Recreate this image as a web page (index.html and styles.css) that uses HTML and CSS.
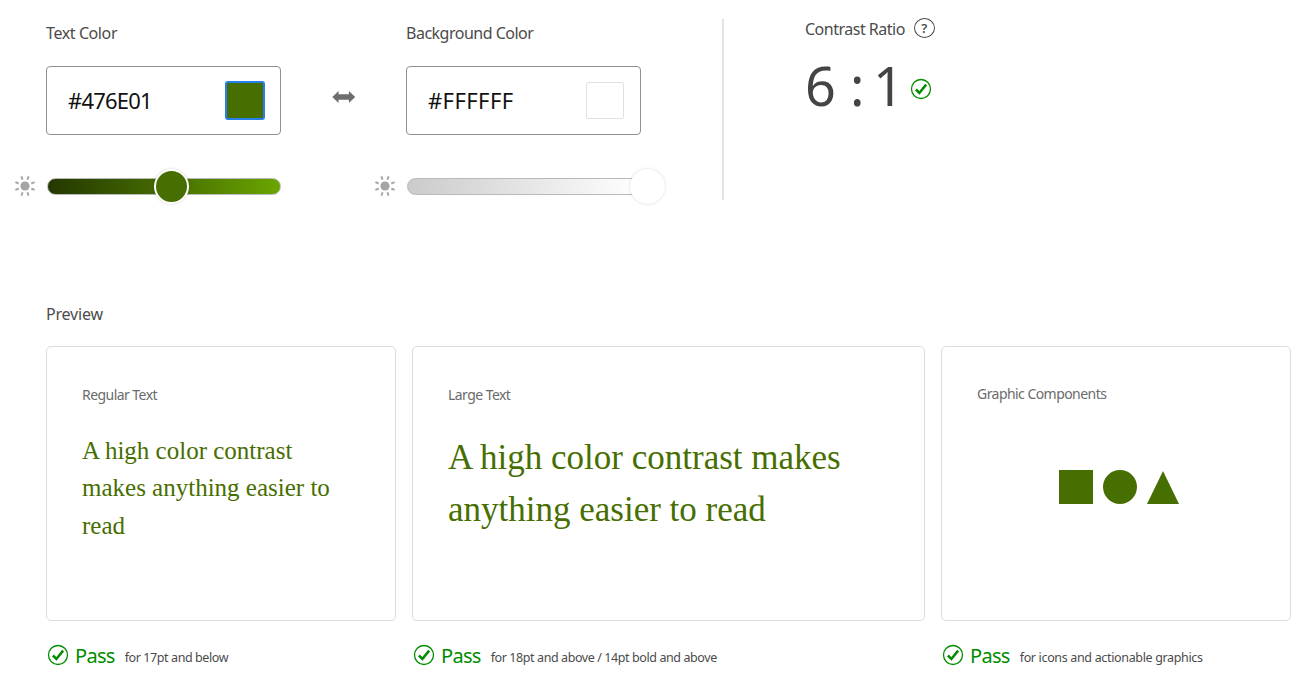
FILE: index.html
```html
<!DOCTYPE html>
<html lang="en">
<head>
<meta charset="utf-8">
<title>Contrast Checker</title>
<link rel="stylesheet" href="styles.css">
</head>
<body>
<svg class="defs" width="0" height="0" aria-hidden="true">
  <symbol id="check" viewBox="0 0 22 22">
    <circle cx="11" cy="11" r="9.5" fill="none" stroke="currentColor" stroke-width="1.3"/>
    <path d="M5.9 11.5L9.4 15L16.1 6.6" fill="none" stroke="currentColor" stroke-width="2.5"/>
  </symbol>
  <symbol id="sun" viewBox="0 0 22 22">
    <circle cx="11" cy="11" r="4.6" fill="currentColor"/>
    <path d="M13.4 4.7L14.6 1.4M17.3 8.5L20.6 7.2M17.3 13.5L20.6 14.8M13.4 17.3L14.6 20.6M8.6 17.3L7.4 20.6M4.7 13.5L1.4 14.8M4.7 8.5L1.4 7.2M8.6 4.7L7.4 1.4" fill="none" stroke="currentColor" stroke-width="1.9"/>
  </symbol>
</svg>
<main class="page">
  <section class="controls">
    <div class="picker">
      <h2 class="label">Text Color</h2>
      <div class="field"><span class="hex">#476E01</span><span class="swatch swatch-active"></span></div>
      <svg class="sun"><use href="#sun"/></svg>
      <div class="track track-green"><span class="thumb thumb-green"></span></div>
    </div>
    <svg class="swap" viewBox="0 0 24 14"><path d="M0.3 7L6.6 0.9V4.3H16.9V0.9L23.2 7L16.9 13.1V9.7H6.6V13.1Z" fill="#6e6e6e"/></svg>
    <div class="picker">
      <h2 class="label label-bg">Background Color</h2>
      <div class="field"><span class="hex hex-bg">#FFFFFF</span><span class="swatch swatch-white"></span></div>
      <svg class="sun"><use href="#sun"/></svg>
      <div class="track track-white"><span class="thumb thumb-white"></span></div>
    </div>
    <div class="ratio">
      <div class="ratio-head"><h2 class="label label-ratio">Contrast Ratio</h2><span class="help">?</span></div>
      <div class="ratio-value"><span class="n">6</span><span class="colon">:</span><span class="one">1</span><svg class="check"><use href="#check"/></svg></div>
    </div>
  </section>
  <section class="preview">
    <h2 class="label label-preview">Preview</h2>
    <div class="cards">
      <article>
        <div class="card"><h3 class="kind">Regular Text</h3><p class="sample regular">A high color contrast makes anything easier to read</p></div>
        <div class="result"><svg class="check"><use href="#check"/></svg><strong class="pass">Pass</strong><span class="note">for 17pt and below</span></div>
      </article>
      <article>
        <div class="card"><h3 class="kind">Large Text</h3><p class="sample large">A high color contrast makes anything easier to read</p></div>
        <div class="result"><svg class="check"><use href="#check"/></svg><strong class="pass">Pass</strong><span class="note">for 18pt and above / 14pt bold and above</span></div>
      </article>
      <article>
        <div class="card"><h3 class="kind kind-graphic">Graphic Components</h3>
          <svg class="shapes" viewBox="0 0 120 34"><path d="M0 0H34V34H0ZM88 34L104 1L120 34Z"/><circle cx="61" cy="17" r="17"/></svg>
        </div>
        <div class="result"><svg class="check"><use href="#check"/></svg><strong class="pass">Pass</strong><span class="note note-graphic">for icons and actionable graphics</span></div>
      </article>
    </div>
  </section>
</main>
</body>
</html>
```
FILE: styles.css
```css
* { box-sizing: border-box; }
body { margin: 0; background: #fff; color: #4b4b4b; font-family: "Noto Sans", sans-serif; }
h2, h3, p { margin: 0; font-weight: 400; }
.defs { position: absolute; }
.page { height: 688px; overflow: hidden; }
.controls { display: flex; align-items: flex-start; height: 303px; padding-left: 14px; }
.picker { display: grid; grid-template-columns: 32px 235px; grid-template-rows: 66px 69px 103px; }
.label { font-size: 16px; line-height: 22px; letter-spacing: -0.4px; white-space: nowrap; }
.label-bg { letter-spacing: -0.5px; }
.label-ratio { letter-spacing: -0.5px; }
.label-preview { letter-spacing: -0.2px; }
.picker .label { grid-column: 2; padding-top: 22px; }
.field { grid-column: 2; display: flex; align-items: center; justify-content: space-between; padding: 0 15px 0 21px; border: 1px solid #909090; border-radius: 4px; }
.hex { margin-top: -2px; color: #111; font-size: 22px; line-height: 30px; letter-spacing: -0.8px; }
.hex-bg { letter-spacing: 0.4px; }
.swatch { width: 40px; height: 39px; margin-top: -1px; border-radius: 3px; }
.swatch-active { background: #476e01; border: 2px solid #2680eb; }
.swatch-white { width: 38px; height: 37px; margin: 0 1px 0 0; border: 1px solid #e1e1e1; border-radius: 2px; }
.sun { width: 22px; height: 22px; margin-top: -1px; align-self: center; color: #a5a5a5; }
.track { display: flex; align-items: center; align-self: center; width: 234px; height: 17px; margin-left: 1px; border: 1px solid #b9b9b9; border-radius: 9px; }
.track-green { background: linear-gradient(90deg, #243800, #476e01 53%, #6ba600); }
.track-white { background: linear-gradient(90deg, #cbcbcb, #fff); }
.thumb { flex: none; width: 35px; height: 35px; border: 2px solid #fff; border-radius: 50%; box-shadow: 0 0 3px rgba(0, 0, 0, .16); }
.thumb-green { margin-left: 106px; background: #476e01; }
.thumb-white { margin-left: 222px; background: #fff; }
.swap { width: 24px; height: 14px; margin: 90px 31px 0 51px; }
.swap + .picker { margin-left: -13px; }
.ratio { display: flex; flex-direction: column; height: 181px; margin: 19px 0 0 81px; padding-left: 81px; border-left: 2px solid #e4e4e4; }
.ratio-head { display: flex; align-items: center; gap: 9px; height: 20px; }
.help { display: flex; align-items: center; justify-content: center; width: 21px; height: 20px; margin-top: -2px; border: 1.5px solid #4b4b4b; border-radius: 50%; font-size: 13px; font-weight: 600; line-height: 18px; }
.ratio-value { display: flex; align-items: center; height: 76px; margin-top: 8px; font-size: 54px; line-height: 76px; color: #444; }
.ratio-value .check { margin-top: 7px; }
.n { width: 45px; }
.colon { width: 23px; }
.one { width: 37px; }
.check { flex: none; width: 22px; height: 22px; color: #008c00; }
.preview { padding-left: 46px; }
.cards { display: grid; grid-template-columns: 350px 513px 350px; gap: 16px; margin-top: 21px; }
.card { height: 275px; padding: 38px 35px 0; border: 1px solid #dcdcdc; border-radius: 5px; }
.kind { font-size: 14px; line-height: 20px; letter-spacing: -0.55px; color: #6b6b6b; }
.kind-graphic { margin-top: -1px; }
.sample { color: #476e01; font-family: "Liberation Serif", serif; }
.regular { margin-top: 27px; font-size: 25px; line-height: 37.4px; }
.large { margin-top: 27px; font-size: 35px; line-height: 52px; }
.shapes { display: block; width: 120px; height: 34px; margin: 66px 0 0 82px; fill: #476e01; }
.result { display: flex; align-items: center; height: 26px; margin-top: 22px; }
.result .check { margin: -2px 0 0 1px; }
.pass { margin-left: 6px; color: #008c00; font-size: 20px; font-weight: 400; line-height: 26px; letter-spacing: -0.7px; }
.note { margin: 4px 0 0 10px; font-size: 12.5px; line-height: 20px; letter-spacing: -0.41px; white-space: nowrap; }
.note-graphic { letter-spacing: -0.34px; }
```
